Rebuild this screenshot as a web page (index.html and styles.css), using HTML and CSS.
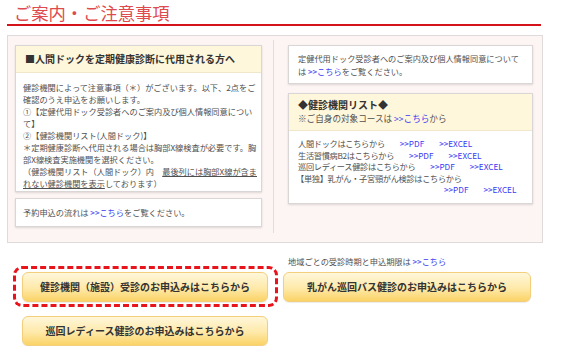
FILE: index.html
```html
<!DOCTYPE html>
<html lang="ja">
<head>
  <meta charset="UTF-8" />
  <meta name="viewport" content="width=device-width, initial-scale=1.0"/>
  <title>ご案内・ご注意事項</title>
  <link rel="stylesheet" href="styles.css">
</head>
<body>
  <div class="wrap">

    <!-- Title -->
    <h1 class="page-title">ご案内・ご注意事項</h1>

    <!-- Notice box -->
    <section class="notice">
      <div class="col col-left">
        <div class="card">
          <div class="card-head">■人間ドックを定期健康診断に代用される方へ</div>
          <div class="card-body">
            健診機関によって注意事項（＊）がございます。以下、2点をご確認のうえ申込をお願いします。<br>
            ①【定健代用ドック受診者へのご案内及び個人情報同意について】<br>
            ②【健診機関リスト(人間ドック)】<br>
            ＊定期健康診断へ代用される場合は胸部X線検査が必要です。胸部X線検査実施機関を選択ください。<br>
            （健診機関リスト（人間ドック）内　<span class="uline">最後列には胸部X線が含まれない健診機関を表示</span>しております）
          </div>
        </div>
        <div class="card">
          <div class="card-body short">予約申込の流れは <a href="#">&gt;&gt;こちら</a>をご覧ください。</div>
        </div>
      </div>

      <div class="col col-right">
        <div class="card">
          <div class="card-body info">定健代用ドック受診者へのご案内及び個人情報同意については <a href="#">&gt;&gt;こちら</a>をご覧ください。</div>
        </div>
        <div class="card">
          <div class="card-head list-head">
            <strong>◆健診機関リスト◆</strong><br>
            ※ご自身の対象コースは <a href="#">&gt;&gt;こちら</a>から
          </div>
          <div class="card-body dl">
            <div>人間ドックはこちらから<a href="#">&gt;&gt;PDF</a><a href="#">&gt;&gt;EXCEL</a></div>
            <div>生活習慣病B2はこちらから<a href="#">&gt;&gt;PDF</a><a href="#">&gt;&gt;EXCEL</a></div>
            <div>巡回レディース健診はこちらから<a href="#">&gt;&gt;PDF</a><a href="#">&gt;&gt;EXCEL</a></div>
            <div class="single">【単独】乳がん・子宮頸がん検診はこちらから</div>
            <div class="single-links"><a href="#">&gt;&gt;PDF</a><a href="#">&gt;&gt;EXCEL</a></div>
          </div>
        </div>
      </div>
    </section>

    <!-- Apply buttons -->
    <section class="apply">
      <div class="apply-left">
        <div class="highlight">
          <a href="#" class="apply-btn">健診機関（施設）受診のお申込みはこちらから</a>
        </div>
        <a href="#" class="apply-btn ladies">巡回レディース健診のお申込みはこちらから</a>
      </div>
      <div class="apply-right">
        <p class="caption">地域ごとの受診時期と申込期限は <a href="#">&gt;&gt;こちら</a></p>
        <a href="#" class="apply-btn">乳がん巡回バス健診のお申込みはこちらから</a>
      </div>
    </section>

  </div>
</body>
</html>
```

FILE: styles.css
```css
body {
  margin: 0;
  font-family: "Noto Sans CJK JP", sans-serif;
  color: #505050;
  background-color: #fff;
}

a {
  color: #3a3af4;
  text-decoration: none;
}

.wrap {
  width: 536px;
  margin-left: 7px;
}

.page-title {
  box-sizing: border-box;
  width: 534px;
  height: 26px;
  margin: 0;
  padding-left: 7px;
  font-size: 17.3px;
  font-weight: normal;
  line-height: 26px;
  color: #df4a4f;
  border-bottom: 2px solid #d3121a;
}

.notice {
  display: flex;
  margin-top: 9px;
  padding: 4px 9px 9px 7px;
  background-color: #fdf4f4;
  border: 1px solid #e0dbdb;
}

.col {
  display: flex;
  flex-direction: column;
  padding: 5px 0 6px;
}

.col-left {
  width: 247px;
  margin-right: 11px;
  gap: 6px;
}

.col-right {
  width: 245px;
  padding-left: 14px;
  border-left: 1px solid #e3dcdc;
  gap: 9px;
}

.card {
  background: white;
  border: 1px solid #dad6d6;
  box-shadow: 0 1px 2px rgba(0, 0, 0, 0.12);
}

.card-head {
  height: 26px;
  padding-left: 9px;
  font-size: 10px;
  font-weight: bold;
  line-height: 26px;
  color: #333;
  background-color: #fff7dc;
  border-bottom: 1px solid #efe6cc;
}

.card-body {
  padding: 8px 0 2px 7px;
  font-size: 8.2px;
  line-height: 12px;
}

.card-body.short {
  padding: 7px 7px 8px;
}

.card-body.info {
  padding: 6px 9px 5px;
  line-height: 13px;
}

.uline {
  text-decoration: underline;
}

.list-head {
  height: auto;
  padding: 4px 9px 5px;
  font-size: 8.6px;
  font-weight: normal;
  line-height: 13px;
  color: #505050;
}

.list-head strong {
  font-size: 10px;
  color: #333;
}

.dl {
  padding: 7px 9px;
  line-height: 11.6px;
  letter-spacing: -0.3px;
}

.dl a {
  margin-left: 15px;
  letter-spacing: 0;
}

.dl .single {
  margin-left: -2px;
}

.single-links {
  padding-left: 131px;
}

.apply {
  display: flex;
  align-items: flex-start;
  margin-top: 12px;
}

.apply-left {
  width: 265px;
  margin-left: 6px;
  padding-top: 11px;
}

.highlight {
  padding: 3px 7px 2px 6px;
  border: 3px dashed #e8141c;
  border-radius: 9px;
}

.apply-btn {
  display: block;
  box-sizing: border-box;
  height: 30px;
  font-size: 10px;
  font-weight: bold;
  line-height: 28px;
  text-align: center;
  color: #333;
  background: linear-gradient(#fff7da, #fee9a8 55%, #fbd366);
  border: 1px solid #f3cf7c;
  border-radius: 6px;
  box-shadow: 0 1px 1px rgba(0, 0, 0, 0.08);
}

.apply-btn.ladies {
  width: 246px;
  margin: 9px 0 0 9px;
}

.apply-right {
  width: 248px;
  margin-left: 5px;
}

.caption {
  margin: 0 0 5px;
  padding-left: 5px;
  font-size: 8.2px;
  line-height: 12px;
}
```
